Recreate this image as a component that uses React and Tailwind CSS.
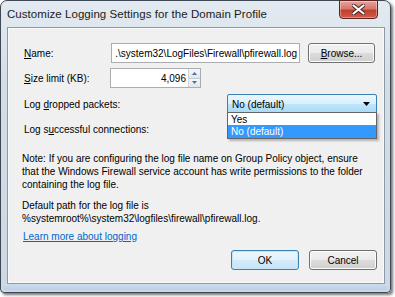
import React from "react";

const btn =
  "flex items-center justify-center rounded-[3px] border border-[#707070] bg-[linear-gradient(#f2f2f2_0%,#ebebeb_49%,#dddddd_50%,#cfcfcf_100%)] shadow-[inset_0_0_0_1px_#fcfcfc] text-black";

export default function App() {
  return (
    <div
      className="relative w-[395px] h-[297px] bg-white overflow-hidden text-[10px] text-black"
      style={{ fontFamily: '"Liberation Sans", Arial, sans-serif' }}
    >
      {/* window */}
      <div className="absolute left-0 top-0 w-[391px] h-[293px] rounded-t-[7px] rounded-b-[4px] border border-[#3d4854] bg-[linear-gradient(180deg,#e3eaf1_0%,#d3dde8_30%,#cdd8e4_100%)] shadow-[2px_2px_3px_rgba(0,0,0,0.55)] flex flex-col">
        {/* title bar */}
        <div className="relative h-[26px] flex items-center pl-[6px] pt-[2px] shrink-0">
          <span className="text-[11.5px] text-[#1c1c1c] tracking-[0.05px]">
            Customize Logging Settings for the Domain Profile
          </span>
          <div className="absolute right-[12px] top-[-1px] w-[39px] h-[19px] rounded-b-[4px] border border-[#5a2222] bg-[linear-gradient(180deg,#e8a49c_0%,#d7776b_45%,#c2402f_55%,#cf5b48_100%)] flex items-center justify-center shadow-[inset_0_0_0_1px_rgba(255,255,255,0.35)]">
            <svg width="13" height="11" viewBox="0 0 13 11">
              <path
                d="M1.5 1.5 L11.5 9.5 M11.5 1.5 L1.5 9.5"
                stroke="#4a1e1e"
                strokeWidth="4"
                strokeLinecap="round"
              />
              <path
                d="M1.5 1.5 L11.5 9.5 M11.5 1.5 L1.5 9.5"
                stroke="#ffffff"
                strokeWidth="2.2"
                strokeLinecap="round"
              />
            </svg>
          </div>
        </div>
        {/* client area */}
        <div className="ml-[6px] w-[378px] h-[257px] border border-[#8d99a6] bg-[#f0f0f0] shadow-[inset_0_0_0_1px_#fafafa] relative pl-[16px] pr-[7px]">
          {/* Name row */}
          <div className="flex items-center mt-[15px] h-[20px]">
            <span className="w-[87px]">
              <u>N</u>ame:
            </span>
            <div className="w-[189px] h-[20px] border border-[#abadb3] bg-white flex justify-end items-center whitespace-nowrap pr-[2px]">
              .\system32\LogFiles\Firewall\pfirewall.log
            </div>
            <div className={`${btn} ml-[8px] w-[67px] h-[20px]`}>
              <span>
                <u>B</u>rowse...
              </span>
            </div>
          </div>
          {/* Size row */}
          <div className="flex items-center mt-[5px] h-[20px]">
            <span className="w-[86px]">
              <u>S</u>ize limit (KB):
            </span>
            <div className="w-[91px] h-[20px] border border-[#abadb3] bg-white flex items-stretch">
              <div className="flex-1 flex items-center justify-end pr-[2px]">4,096</div>
              <div className="w-[12px] flex flex-col border-l border-[#d0d4da]">
                <div className="flex-1 flex items-center justify-center bg-[linear-gradient(#f6f6f6,#e2e6ec)] border-b border-[#c5cbd3]">
                  <svg width="5" height="3" viewBox="0 0 5 3">
                    <path d="M0 3 L2.5 0 L5 3 Z" fill="#4a6fa8" />
                  </svg>
                </div>
                <div className="flex-1 flex items-center justify-center bg-[linear-gradient(#f6f6f6,#e2e6ec)]">
                  <svg width="5" height="3" viewBox="0 0 5 3">
                    <path d="M0 0 L2.5 3 L5 0 Z" fill="#4a6fa8" />
                  </svg>
                </div>
              </div>
            </div>
          </div>
          {/* Log dropped packets */}
          <div className="flex items-center mt-[6px] h-[20px]">
            <span className="w-[203px]">
              Log <u>d</u>ropped packets:
            </span>
            <div className="w-[150px] h-[20px] rounded-[2px] border border-[#3c7fb1] bg-[linear-gradient(#eaf6fd_0%,#d9f0fc_49%,#bee6fd_50%,#a7d9f5_100%)] flex items-center pl-[4px] pr-[6px]">
              <span className="flex-1">No (default)</span>
              <svg width="7" height="4" viewBox="0 0 7 4">
                <path d="M0 0 L7 0 L3.5 4 Z" fill="#000" />
              </svg>
            </div>
          </div>
          {/* Log successful */}
          <div className="flex items-center mt-[5px] h-[20px]">
            <span>
              Log s<u>u</u>ccessful connections:
            </span>
          </div>
          {/* dropdown list overlay */}
          <div className="absolute left-[219px] top-[84px] w-[150px] h-[27px] border border-[#646464] bg-white shadow-[2px_2px_2px_rgba(0,0,0,0.25)] flex flex-col">
            <div className="h-[12px] flex items-center pl-[3px]">Yes</div>
            <div className="h-[13px] flex items-center pl-[3px] bg-[#3399ff] text-white">No (default)</div>
          </div>
          {/* Note */}
          <div className="mt-[13px] leading-[13px] -ml-[2px] w-[345px]">
            Note: If you are configuring the log file name on Group Policy object, ensure
            that the Windows Firewall service account has write permissions to the folder
            containing the log file.
          </div>
          <div className="mt-[8px] leading-[13px] -ml-[2px]">
            Default path for the log file is
            <br />
            %systemroot%\system32\logfiles\firewall\pfirewall.log.
          </div>
          <div className="mt-[5px] -ml-[1px] leading-[13px] text-[#0066cc] underline">
            Learn more about logging
          </div>
          {/* buttons */}
          <div className="flex justify-end gap-[10px] mt-[7px]">
            <div className="w-[68px] h-[20px] rounded-[3px] border border-[#3c7fb1] bg-[linear-gradient(#eaf6fd_0%,#e4f2fb_49%,#d4ebfa_50%,#c8e4f7_100%)] shadow-[inset_0_0_0_1px_#c6e6f8] flex items-center justify-center">
              OK
            </div>
            <div className={`${btn} w-[68px] h-[20px]`}>Cancel</div>
          </div>
        </div>
        {/* bottom frame glow */}
        <div className="flex-1 mx-[2px] mb-[2px] rounded-b-[3px] bg-[linear-gradient(#cfdcea,#b8d0ea)]" />
      </div>
    </div>
  );
}
